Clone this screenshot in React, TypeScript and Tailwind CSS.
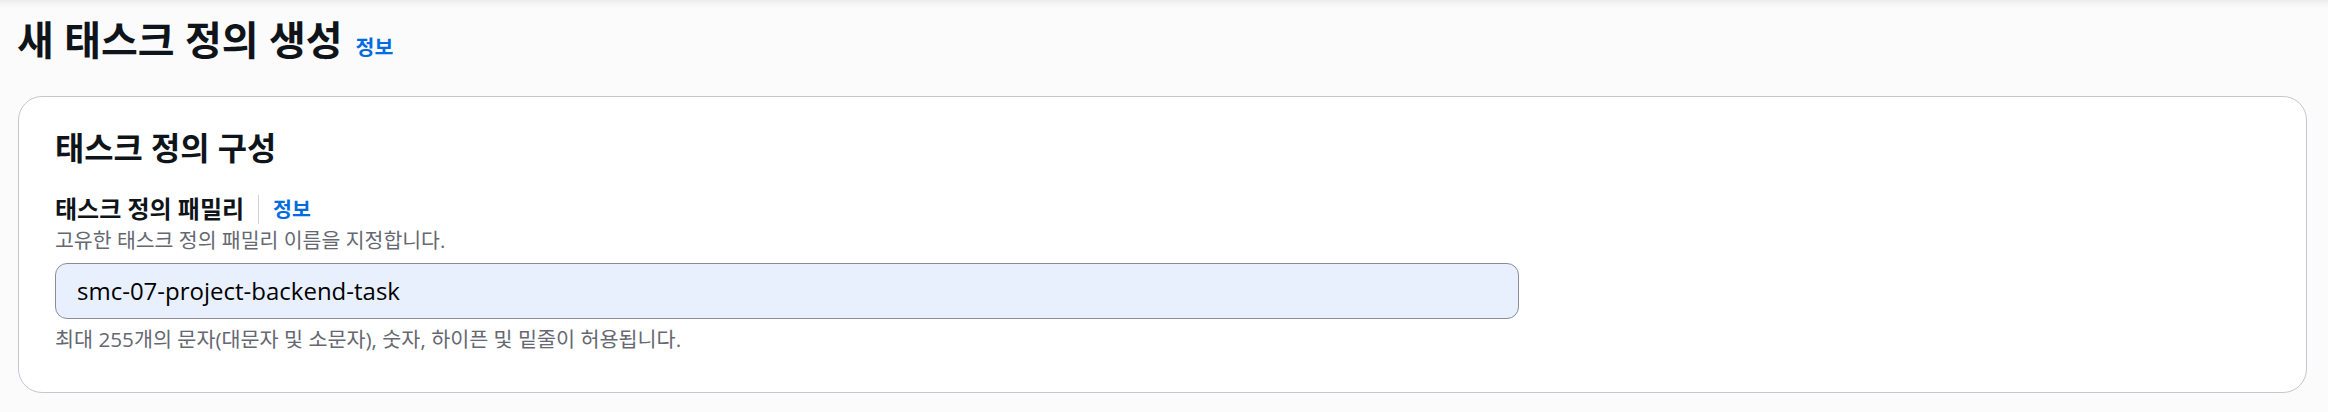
import React from "react";

const FONT = '"Open Sans", "Noto Sans CJK KR", "Noto Sans", sans-serif';

export default function App() {
  return (
    <div
      className="w-[2328px] h-[412px] bg-[#fbfbfb] shadow-[inset_0_10px_10px_-10px_rgba(0,0,0,0.12)] pl-[18px] pr-[21px] pt-[14px] overflow-hidden"
      style={{ fontFamily: FONT }}
    >
      <div className="flex items-baseline">
        <h1 className="text-[40px] leading-[52px] font-bold text-[#0f141a] -ml-[1px]">새 태스크 정의 생성</h1>
        <a className="ml-[13px] text-[20.5px] font-bold text-[#006ce0] leading-[24px]">정보</a>
      </div>
      <div className="mt-[30px] bg-white border border-[#c6c6cd] rounded-[24px] pl-[36px] pt-[33px] pb-[41px]">
        <h2 className="text-[31.8px] leading-[36px] font-bold text-[#0f141a]">태스크 정의 구성</h2>
        <div className="mt-[28px] flex items-center h-[30px]">
          <span className="text-[24px] leading-[30px] font-bold text-[#0f141a]">태스크 정의 패밀리</span>
          <span className="mx-[14px] w-[1px] h-[29px] bg-[#d1d1d8]"></span>
          <a className="text-[20.5px] font-bold text-[#006ce0] leading-[24px]">정보</a>
        </div>
        <div className="mt-[4px] text-[20.5px] leading-[24px] text-[#656871]">고유한 태스크 정의 패밀리 이름을 지정합니다.</div>
        <div className="mt-[11px] w-[1464px] h-[56px] rounded-[12px] border border-[#8c8c94] bg-[#e8f0fe] flex items-center pl-[21px] text-[24px] text-black">
          smc-07-project-backend-task
        </div>
        <div className="mt-[8px] text-[20.7px] leading-[24px] text-[#656871]">
          최대 255개의 문자(대문자 및 소문자), 숫자, 하이픈 및 밑줄이 허용됩니다.
        </div>
      </div>
    </div>
  );
}
